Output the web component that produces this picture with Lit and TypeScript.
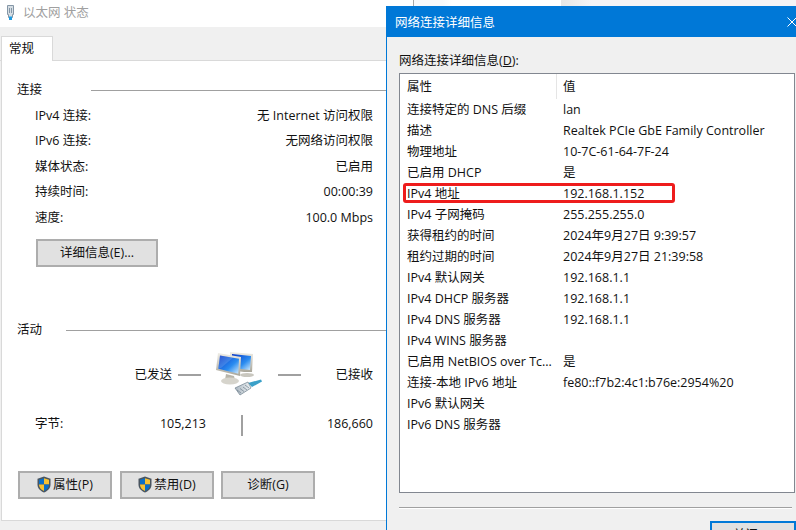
import { LitElement, html, css, svg } from "lit";
import { customElement } from "lit/decorators.js";

const shield = svg`<svg class="shield" width="14" height="17" viewBox="0 0 14 17">
  <path d="M7 .5 13.500 2.800V8.500C13.500 12.500 10.500 15 7 16.500 3.500 15 .5 12.500 .5 8.500V2.800Z" fill="#4a5560"/>
  <path d="M7 2.200V8.500H2V3.800Z" fill="#0a6fc8"/>
  <path d="M7 2.200 12 3.800V8.500H7Z" fill="#f7c233"/>
  <path d="M2 8.500H7V15C4.500 14 2 12 2 8.500Z" fill="#f7c233"/>
  <path d="M7 8.500H12C12 12 9.500 14 7 15Z" fill="#0a6fc8"/>
</svg>`;

const netIcon = svg`<svg width="52" height="48" viewBox="0 0 52 48">
  <defs>
    <linearGradient id="scr" x1="0" y1="0" x2="1" y2="1"><stop offset="0" stop-color="#0836c8"/><stop offset=".6" stop-color="#2a8cf0"/><stop offset="1" stop-color="#d4ecfc"/></linearGradient>
    <linearGradient id="bez" x1="0" y1="0" x2="0" y2="1"><stop offset="0" stop-color="#efede6"/><stop offset="1" stop-color="#a9a69a"/></linearGradient>
    <linearGradient id="plug" x1="0" y1="0" x2="1" y2="0"><stop offset="0" stop-color="#a9b5bf"/><stop offset="1" stop-color="#eef2f4"/></linearGradient>
  </defs>
  <path d="M16 2 39 4 38 22 30 22 16 20Z" fill="url(#bez)"/>
  <path d="M18 4 37 6 36 20 18 18Z" fill="url(#scr)"/>
  <ellipse cx="33" cy="25" rx="7" ry="2" fill="#c9c7bf"/>
  <path d="M4 3 27 7 26 26 2 20Z" fill="url(#bez)"/>
  <path d="M6 5.500 25 8.800 24.300 23.800 4.300 18.800Z" fill="url(#scr)"/>
  <path d="M6 5.500 19 7.800 7 18 4.300 18.800Z" fill="#fff" opacity=".15"/>
  <path d="M12 24 20 26 21 30H11Z" fill="#b8b5aa"/>
  <ellipse cx="16" cy="31" rx="9" ry="3.500" fill="#d6d4cc"/>
  <path d="M34 33 47 29.500 48 31.500 38 37Z" fill="#3aa0c8"/>
  <path d="M21 38 34 32 37 38 26 45Z" fill="url(#plug)" stroke="#6f7f8c" stroke-width=".7"/>
  <path d="M23 40 27 43M26 38.500 30 41.500M29 37 33 40M31 35 35 38" stroke="#6f7f8c" stroke-width=".7" fill="none"/>
</svg>`;

const left = [
  ["IPv4 连接:", "无 Internet 访问权限"],
  ["IPv6 连接:", "无网络访问权限"],
  ["媒体状态:", "已启用"],
  ["持续时间:", "00:00:39"],
  ["速度:", "100.0 Mbps"],
];

const rows: [string, string][] = [
  ["连接特定的 DNS 后缀", "lan"],
  ["描述", "Realtek PCIe GbE Family Controller"],
  ["物理地址", "10-7C-61-64-7F-24"],
  ["已启用 DHCP", "是"],
  ["IPv4 地址", "192.168.1.152"],
  ["IPv4 子网掩码", "255.255.255.0"],
  ["获得租约的时间", "2024年9月27日 9:39:57"],
  ["租约过期的时间", "2024年9月27日 21:39:58"],
  ["IPv4 默认网关", "192.168.1.1"],
  ["IPv4 DHCP 服务器", "192.168.1.1"],
  ["IPv4 DNS 服务器", "192.168.1.1"],
  ["IPv4 WINS 服务器", ""],
  ["已启用 NetBIOS over Tc...", "是"],
  ["连接-本地 IPv6 地址", "fe80::f7b2:4c1:b76e:2954%20"],
  ["IPv6 默认网关", ""],
  ["IPv6 DNS 服务器", ""],
];

@customElement("app-root")
export class AppRoot extends LitElement {
  static styles = css`
    :host { display: block; position: relative; width: 796px; height: 530px; overflow: hidden; background: #fff;
      font-family: "Open Sans", "Noto Sans CJK SC", sans-serif; font-size: 12.5px; color: #111; line-height: 17px; }
    .backdrop { position: absolute; left: 386px; top: 0; right: 0; height: 6px;
      background: linear-gradient(90deg, #fff 0 27px, #a8a8a8 27px 28px, #f8f9fb 28px 57px, #fff 66px 175px, #e6e6e6 175px, #f4f4f6 205px); }
    .status { position: absolute; left: 0; top: 0; width: 386px; height: 530px; display: flex; flex-direction: column; background: #f0f0f0; }
    .titlebar { height: 27px; background: #fff; display: flex; align-items: center; gap: 8px; padding: 0 0 3px 6px; color: #a0a0a0; box-sizing: border-box; flex: none; }
    .tabs { height: 34px; flex: none; display: flex; align-items: flex-end; padding-left: 1px; box-sizing: border-box; border-bottom: 1px solid #d9d9d9; }
    .tab { width: 52px; height: 25px; box-sizing: border-box; background: #fff; border: 1px solid #d9d9d9; border-bottom: 0; padding: 3px 0 0 7px; margin-bottom: -1px; }
    .sheet { margin-left: 1px; height: 460px; flex: none; background: #fff; border-left: 1px solid #d9d9d9; border-bottom: 1px solid #d9d9d9; box-sizing: border-box; padding: 20px 0 0 15px; display: flex; flex-direction: column; }
    .group { display: flex; align-items: center; height: 17px; flex: none; }
    .group span { width: 74px; flex: none; }
    .group i { flex: 1; height: 1px; background: #a0a0a0; margin-top: 1px; }
    .group.act span { width: 49px; }
    .kv { margin: 4.5px 13px 0 18px; display: grid; grid-template-columns: 1fr auto; grid-auto-rows: 25.5px; align-items: center; flex: none; }
    .kv .val { justify-self: end; }
    .btn { box-sizing: border-box; background: #e1e1e1; border: 2px solid #adadad; display: flex; align-items: center; justify-content: center; gap: 2px; font: inherit; color: #111; height: 28px; padding: 0 0 1px; flex: none; }
    .detail { width: 122px; margin: 9px 0 0 19px; }
    .group.act { margin-top: 54px; }
    .activity { margin: 12px 13px 0 18px; display: grid; grid-template-columns: 143px 23px 77px 23px 1fr; align-items: center; height: 48px; flex: none; }
    .sent { text-align: right; padding-right: 6px; }
    .dash { height: 2px; background: #a0a0a0; margin-top: 2px; }
    .mid { display: flex; justify-content: center; }
    .recv { text-align: right; }
    .bytes { margin: 17px 13px 0 18px; display: grid; grid-template-columns: 171px 1fr; height: 21px; flex: none; }
    .bytes .cell { display: flex; justify-content: space-between; }
    .bytes .cell2 { display: flex; justify-content: space-between; padding-left: 35px; }
    .vline { width: 2px; height: 21px; background: #a0a0a0; }
    .actions { margin: 35px 0 0 1px; display: flex; gap: 8px; flex: none; }
    .actions .btn { width: 94px; }
    .actions .btn + .btn + .btn { margin-left: -1px; }
    .dialog { position: absolute; left: 386px; top: 6px; width: 410px; height: 524px; box-sizing: border-box; border-left: 1px solid #0078d7; border-top: 1px solid #0078d7; background: #f0f0f0; display: flex; flex-direction: column; overflow: hidden; }
    .dtitle { flex: none; height: 30px; background: #0078d7; color: #fff; display: flex; align-items: center; justify-content: space-between; padding-left: 8px; }
    .dtitle svg { margin-right: -1px; }
    .dlabel { margin: 15px 0 0 12px; height: 17px; flex: none; }
    .dlabel u { text-decoration: underline; }
    .list { margin: 4px 0 0 12px; width: 396px; height: 420px; box-sizing: border-box; border: 1px solid #828790; background: #fff; display: flex; flex-direction: column; position: relative; flex: none; }
    .lhead { display: grid; grid-template-columns: 156px 1fr; height: 25px; align-items: center; flex: none; }
    .lhead span { padding-left: 7px; height: 25px; display: flex; align-items: center; box-sizing: border-box; }
    .lhead span + span { border-left: 1px solid #e5e5e5; padding-left: 6px; }
    .lrow { display: grid; grid-template-columns: 156px 1fr; height: 21px; align-items: center; flex: none; }
    .lrow span { padding-left: 7px; white-space: nowrap; overflow: hidden; }
    .mark { position: absolute; left: 3px; top: 109px; width: 272px; height: 20px; box-sizing: border-box; border: 3px solid #ee1c1c; border-radius: 3px; }
    .sep { margin: 14px 0 0 12px; width: 393px; height: 1px; background: #a0a0a0; border-bottom: 1px solid #fff; flex: none; }
    .close { margin: 12px 0 0 323px; width: 86px; height: 28px; border-color: #0078d7; }
  `;

  render() {
    return html`
      <div class="backdrop"></div>
      <section class="status">
        <div class="titlebar">
          <svg width="9" height="15" viewBox="0 0 9 15"><path d="M1.500.5H7.500V9.500H6.500V12.500H2.500V9.500H1.500Z" fill="#d5dde3" stroke="#8496a6"/><path d="M3.500 3V8M5.500 3V8" stroke="#8496a6"/><path d="M3 11.500H6V15H3Z" fill="#1f9ae0"/></svg>
          <span>以太网 状态</span>
        </div>
        <div class="tabs"><div class="tab">常规</div></div>
        <div class="sheet">
          <div class="group"><span>连接</span><i></i></div>
          <div class="kv">
            ${left.map(([a, b]) => html`<span>${a}</span><span class="val">${b}</span>`)}
          </div>
          <button class="btn detail">详细信息(E)...</button>
          <div class="group act"><span>活动</span><i></i></div>
          <div class="activity">
            <span class="sent">已发送</span><span class="dash"></span>
            <span class="mid">${netIcon}</span>
            <span class="dash"></span><span class="recv">已接收</span>
          </div>
          <div class="bytes">
            <div class="cell"><span>字节:</span><span>105,213</span></div>
            <div class="cell2"><i class="vline"></i><span>186,660</span></div>
          </div>
          <div class="actions">
            <button class="btn">${shield}<span>属性(P)</span></button>
            <button class="btn">${shield}<span>禁用(D)</span></button>
            <button class="btn">诊断(G)</button>
          </div>
        </div>
      </section>
      <section class="dialog">
        <div class="dtitle"><span>网络连接详细信息</span>
          <svg width="10" height="10" viewBox="0 0 10 10"><path d="M.5.5 9.500 9.500M9.500.5 .5 9.500" stroke="#fff" stroke-width="1"/></svg>
        </div>
        <div class="dlabel">网络连接详细信息(<u>D</u>):</div>
        <div class="list">
          <div class="lhead"><span>属性</span><span>值</span></div>
          ${rows.map(([a, b]) => html`<div class="lrow"><span>${a}</span><span>${b}</span></div>`)}
          <div class="mark"></div>
        </div>
        <div class="sep"></div>
        <button class="btn close">关闭(C)</button>
      </section>`;
  }
}
